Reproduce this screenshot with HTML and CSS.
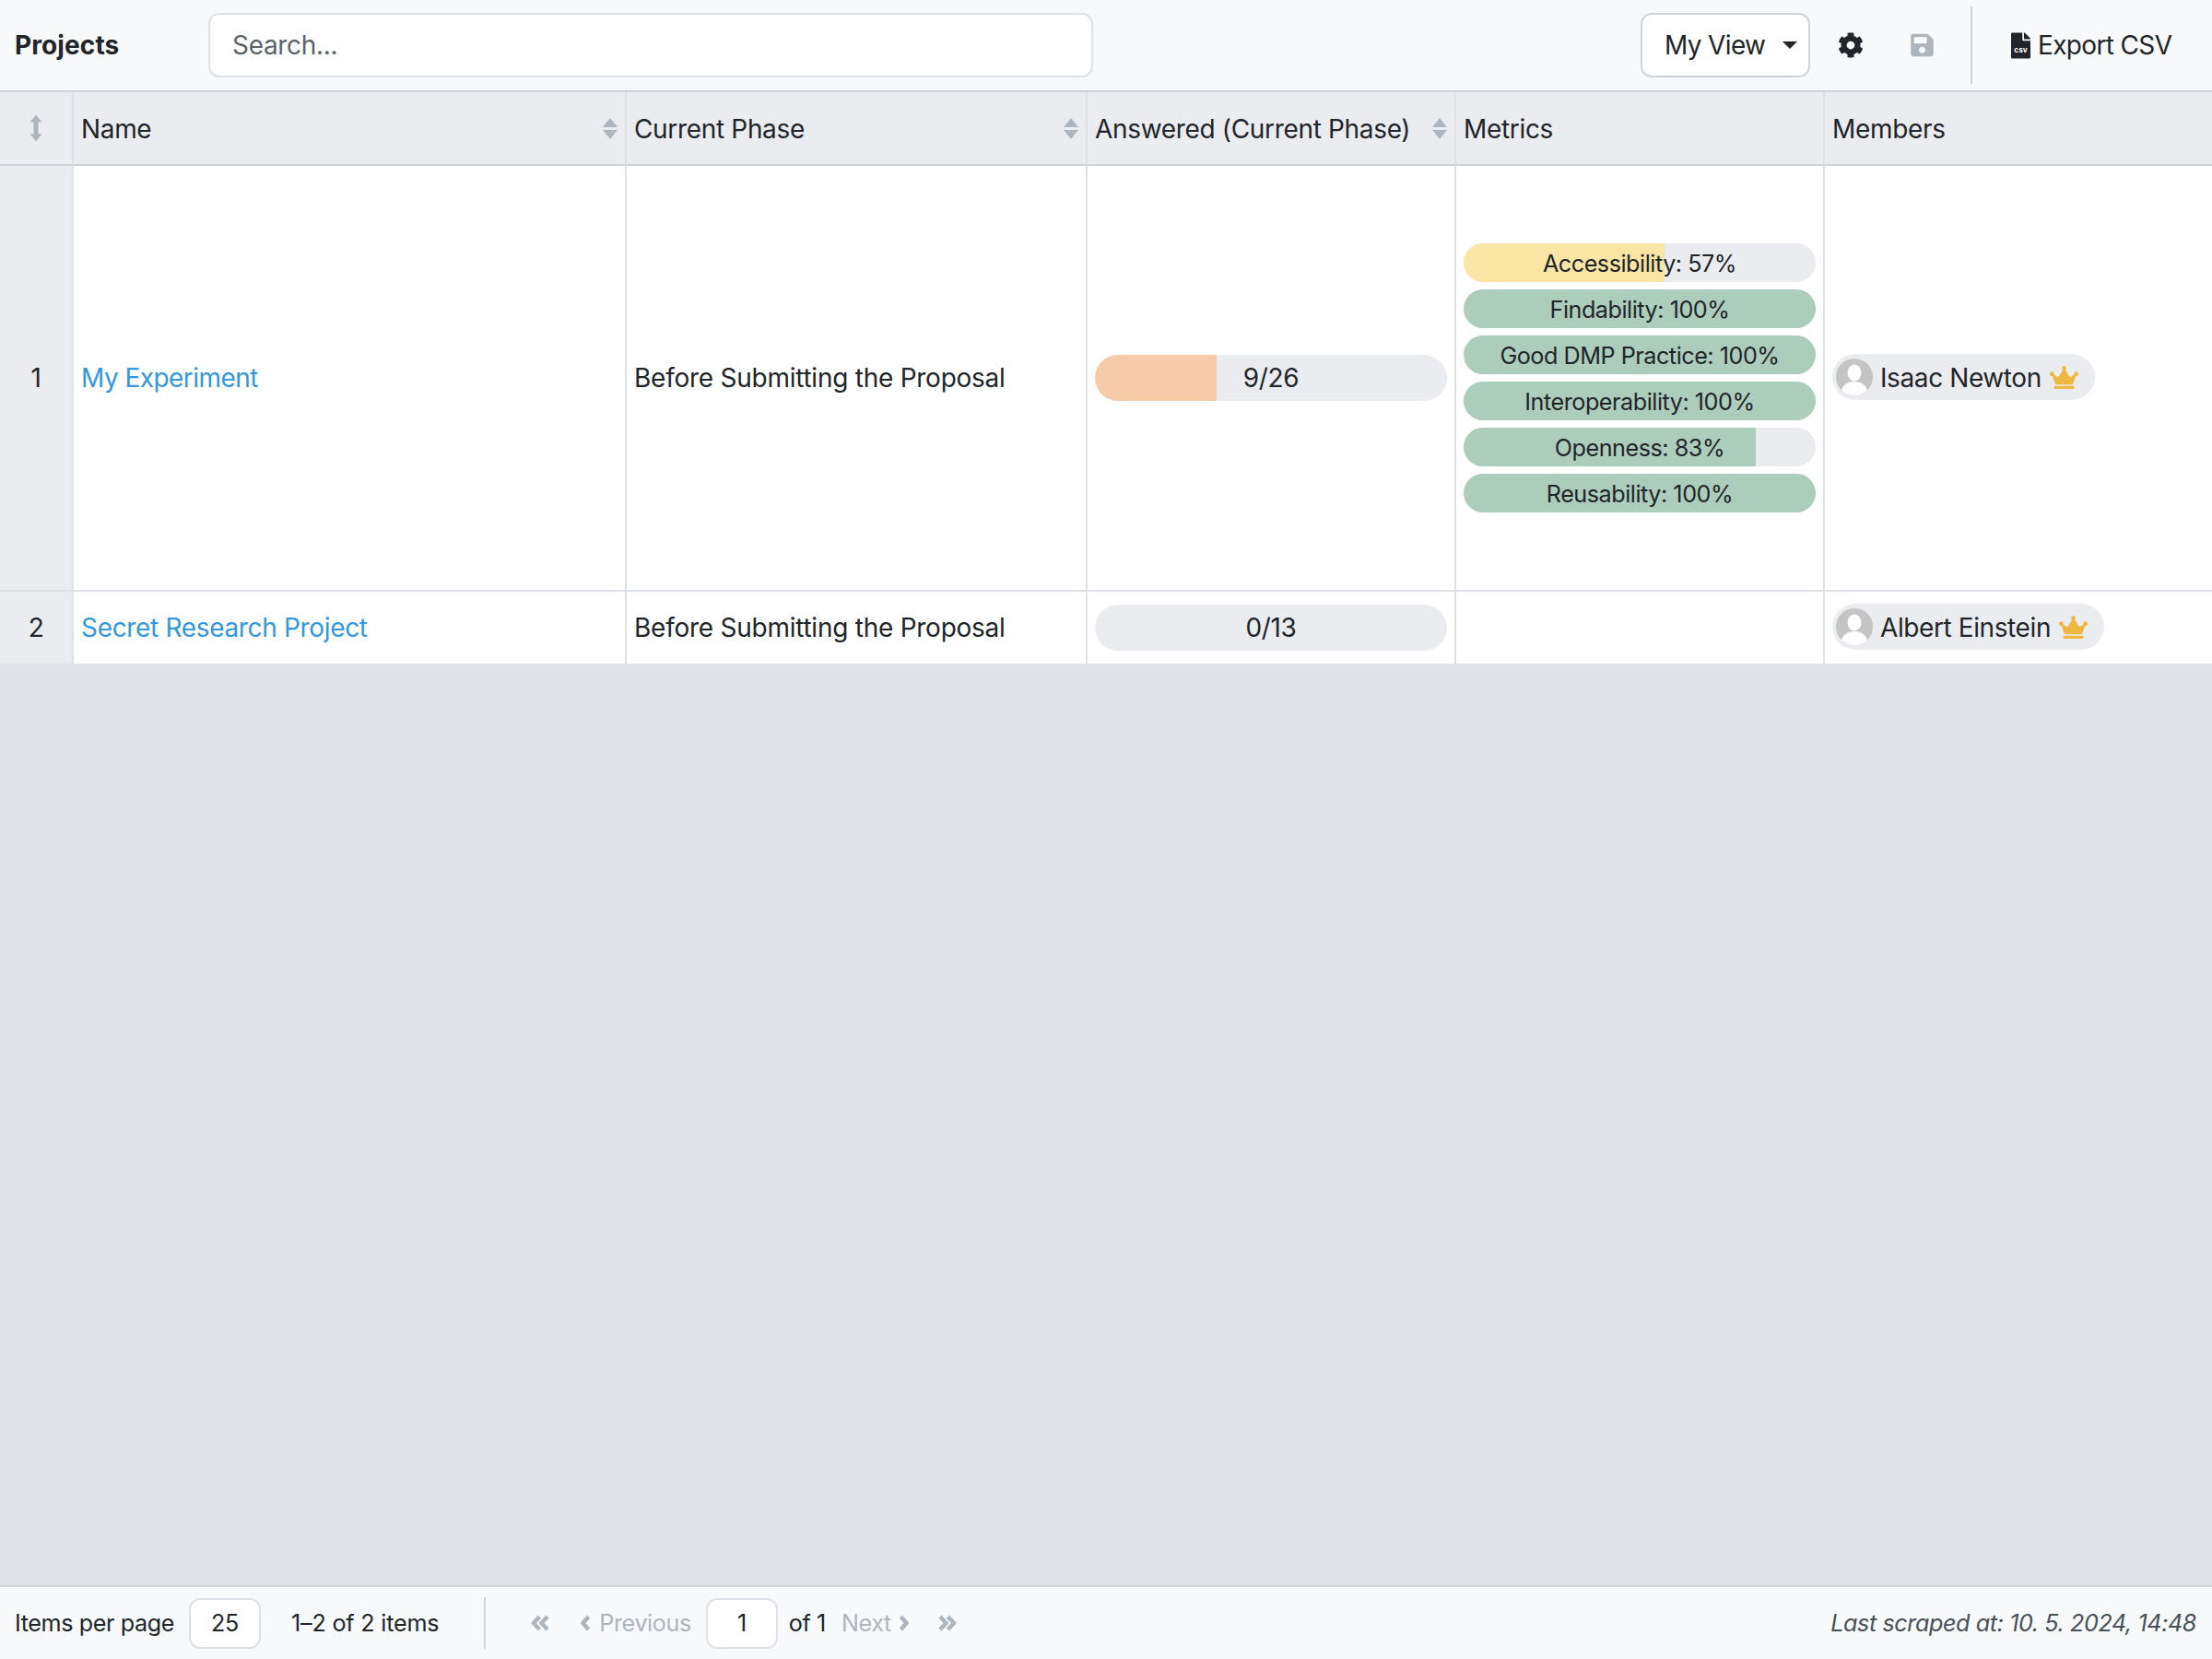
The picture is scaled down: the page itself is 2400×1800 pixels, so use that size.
FILE: index.html
```html
<!DOCTYPE html>
<html lang="en">
<head>
    <meta charset="UTF-8">
    <title>Projects</title>
    <link rel="stylesheet" href="styles.css">
</head>
<body>
    <div class="toolbar">
        <div class="title">Projects</div>
        <input class="search" type="text" placeholder="Search...">
        <div class="toolbar-right">
            <button class="view-select">My View<span class="caret"></span></button>
            <svg class="icon-gear" viewBox="0 0 512 512"><path d="M487.4 315.7l-42.6-24.6c4.3-23.2 4.3-47 0-70.2l42.6-24.6c4.9-2.8 7.1-8.6 5.5-14-11.1-35.6-30-67.8-54.7-94.6-3.8-4.1-10-5.1-14.8-2.3L380.8 110c-17.9-15.4-38.5-27.3-60.8-35.1V25.8c0-5.6-3.9-10.5-9.4-11.7-36.7-8.2-74.3-7.8-109.2 0-5.5 1.2-9.4 6.1-9.4 11.7V75c-22.2 7.9-42.8 19.8-60.8 35.1L88.7 85.5c-4.9-2.8-11-1.9-14.8 2.3-24.7 26.7-43.6 58.9-54.7 94.6-1.7 5.4.6 11.2 5.5 14L67.3 221c-4.3 23.2-4.3 47 0 70.2l-42.6 24.6c-4.9 2.8-7.1 8.6-5.5 14 11.1 35.6 30 67.8 54.7 94.6 3.8 4.1 10 5.1 14.8 2.3l42.6-24.6c17.9 15.4 38.5 27.3 60.8 35.1v49.2c0 5.6 3.9 10.5 9.4 11.7 36.7 8.2 74.3 7.8 109.2 0 5.5-1.2 9.4-6.1 9.4-11.7v-49.2c22.2-7.9 42.8-19.8 60.8-35.1l42.6 24.6c4.9 2.8 11 1.9 14.8-2.3 24.7-26.7 43.6-58.9 54.7-94.6 1.5-5.5-.7-11.3-5.6-14.1zM256 336c-44.1 0-80-35.9-80-80s35.9-80 80-80 80 35.9 80 80-35.9 80-80 80z"/></svg>
            <svg class="icon-save" viewBox="0 0 448 512"><path d="M433.941 129.941l-83.882-83.882A48 48 0 0 0 316.118 32H48C21.49 32 0 53.49 0 80v352c0 26.51 21.49 48 48 48h352c26.51 0 48-21.49 48-48V163.882a48 48 0 0 0-14.059-33.941zM224 416c-35.346 0-64-28.654-64-64 0-35.346 28.654-64 64-64s64 28.654 64 64c0 35.346-28.654 64-64 64zm96-304.52V212c0 6.627-5.373 12-12 12H76c-6.627 0-12-5.373-12-12V108c0-6.627 5.373-12 12-12h228.52c3.183 0 6.235 1.264 8.485 3.515l3.48 3.48A11.996 11.996 0 0 1 320 111.48z"/></svg>
            <div class="toolbar-divider"></div>
            <button class="export">
                <svg class="icon-csv" viewBox="0 0 384 512"><path d="M224 136V0H24C10.7 0 0 10.7 0 24v464c0 13.3 10.7 24 24 24h336c13.3 0 24-10.7 24-24V160H248c-13.2 0-24-10.8-24-24z"/><path d="M377 105L279.1 7c-4.5-4.5-10.6-7-17-7H256v128h128v-6.1c0-6.3-2.5-12.4-7-16.9z"/><text x="192" y="385" text-anchor="middle" class="csv-label">csv</text></svg>
                Export CSV
            </button>
        </div>
    </div>

    <div class="content">
        <table class="projects">
            <colgroup>
                <col class="col-num"><col class="col-name"><col class="col-phase"><col class="col-answered"><col class="col-metrics"><col class="col-members">
            </colgroup>
            <thead>
                <tr>
                    <th class="num-cell">
                        <svg class="icon-reorder" viewBox="0 0 14 30"><path d="M7 0.500L13.500 8.500H0.500ZM7 29.500L0.500 21.500H13.500Z"/><rect x="4.500" y="7" width="5" height="16"/></svg>
                    </th>
                    <th><div class="th-inner">Name<span class="sort"><i class="up"></i><i class="down"></i></span></div></th>
                    <th><div class="th-inner">Current Phase<span class="sort"><i class="up"></i><i class="down"></i></span></div></th>
                    <th><div class="th-inner">Answered (Current Phase)<span class="sort"><i class="up"></i><i class="down"></i></span></div></th>
                    <th><div class="th-inner">Metrics</div></th>
                    <th><div class="th-inner">Members</div></th>
                </tr>
            </thead>
            <tbody>
                <tr class="row-tall">
                    <td class="num-cell">1</td>
                    <td><a class="tight" href="#">My Experiment</a></td>
                    <td class="phase">Before Submitting the Proposal</td>
                    <td>
                        <div class="bar bar-large"><div class="fill fill-orange" style="width: 34.6%"></div><span>9/26</span></div>
                    </td>
                    <td>
                        <div class="metrics">
                            <div class="bar"><div class="fill fill-yellow" style="width: 57%"></div><span>Accessibility: 57%</span></div>
                            <div class="bar"><div class="fill fill-green" style="width: 100%"></div><span>Findability: 100%</span></div>
                            <div class="bar"><div class="fill fill-green" style="width: 100%"></div><span>Good DMP Practice: 100%</span></div>
                            <div class="bar"><div class="fill fill-green" style="width: 100%"></div><span>Interoperability: 100%</span></div>
                            <div class="bar"><div class="fill fill-green" style="width: 83%"></div><span>Openness: 83%</span></div>
                            <div class="bar"><div class="fill fill-green" style="width: 100%"></div><span>Reusability: 100%</span></div>
                        </div>
                    </td>
                    <td>
                        <div class="member">
                            <svg class="avatar" viewBox="0 0 40 40"><defs><clipPath id="av1"><circle cx="20" cy="20" r="20"/></clipPath></defs><circle cx="20" cy="20" r="20" fill="#c4c4c4"/><g clip-path="url(#av1)" fill="#fff"><ellipse cx="20" cy="15.5" rx="7.5" ry="9"/><ellipse cx="20" cy="36" rx="14" ry="11"/></g></svg>
                            <span class="member-name">Isaac Newton</span>
                            <svg class="crown" viewBox="0 0 640 512"><path d="M528 448H112c-8.8 0-16 7.2-16 16v32c0 8.8 7.2 16 16 16h416c8.8 0 16-7.2 16-16v-32c0-8.8-7.2-16-16-16zm64-320c-26.5 0-48 21.5-48 48 0 7.1 1.6 13.7 4.4 19.8L476 239.2c-15.4 9.2-35.3 4-44.2-11.6L350.3 85C361 76.2 368 63 368 48c0-26.5-21.5-48-48-48s-48 21.5-48 48c0 15 7 28.2 17.7 37l-81.5 142.6c-8.9 15.6-28.9 20.8-44.2 11.6l-72.3-43.4c2.7-6 4.4-12.7 4.4-19.8 0-26.5-21.5-48-48-48S0 149.5 0 176s21.5 48 48 48c2.6 0 5.2-.4 7.7-.8L128 416h384l72.3-192.8c2.5.4 5.1.8 7.7.8 26.5 0 48-21.5 48-48s-21.5-48-48-48z"/></svg>
                        </div>
                    </td>
                </tr>
                <tr class="row-short">
                    <td class="num-cell">2</td>
                    <td><a href="#">Secret Research Project</a></td>
                    <td class="phase">Before Submitting the Proposal</td>
                    <td>
                        <div class="bar bar-large"><span>0/13</span></div>
                    </td>
                    <td></td>
                    <td>
                        <div class="member">
                            <svg class="avatar" viewBox="0 0 40 40"><defs><clipPath id="av2"><circle cx="20" cy="20" r="20"/></clipPath></defs><circle cx="20" cy="20" r="20" fill="#c4c4c4"/><g clip-path="url(#av2)" fill="#fff"><ellipse cx="20" cy="15.5" rx="7.5" ry="9"/><ellipse cx="20" cy="36" rx="14" ry="11"/></g></svg>
                            <span class="member-name">Albert Einstein</span>
                            <svg class="crown" viewBox="0 0 640 512"><path d="M528 448H112c-8.8 0-16 7.2-16 16v32c0 8.8 7.2 16 16 16h416c8.8 0 16-7.2 16-16v-32c0-8.8-7.2-16-16-16zm64-320c-26.5 0-48 21.5-48 48 0 7.1 1.6 13.7 4.4 19.8L476 239.2c-15.4 9.2-35.3 4-44.2-11.6L350.3 85C361 76.2 368 63 368 48c0-26.5-21.5-48-48-48s-48 21.5-48 48c0 15 7 28.2 17.7 37l-81.5 142.6c-8.9 15.6-28.9 20.8-44.2 11.6l-72.3-43.4c2.7-6 4.4-12.7 4.4-19.8 0-26.5-21.5-48-48-48S0 149.5 0 176s21.5 48 48 48c2.6 0 5.2-.4 7.7-.8L128 416h384l72.3-192.8c2.5.4 5.1.8 7.7.8 26.5 0 48-21.5 48-48s-21.5-48-48-48z"/></svg>
                        </div>
                    </td>
                </tr>
            </tbody>
        </table>
    </div>

    <div class="footer">
        <span class="per-page">Items per page</span>
        <div class="page-box page-box-size">25</div>
        <span class="item-count">1–2 of 2 items</span>
        <div class="footer-divider"></div>
        <svg class="chev chev-first" viewBox="0 0 21 18"><path d="M9.500 2L3 9l6.500 7M18 2l-6.500 7 6.500 7"/></svg>
        <svg class="chev chev-prev" viewBox="0 0 11 18"><path d="M8.500 2L2.500 9l6 7"/></svg>
        <span class="pager-off">Previous</span>
        <div class="page-box page-box-current">1</div>
        <span class="of-pages">of 1</span>
        <span class="pager-off pager-next">Next</span>
        <svg class="chev chev-next" viewBox="0 0 11 18"><path d="M2.500 2l6 7-6 7"/></svg>
        <svg class="chev chev-last" viewBox="0 0 21 18"><path d="M3 2l6.500 7L3 16M11.500 2L18 9l-6.500 7"/></svg>
        <span class="scraped">Last scraped at: 10. 5. 2024, 14:48</span>
    </div>
</body>
</html>
```

FILE: styles.css
```css
* {
    box-sizing: border-box;
}
body {
    margin: 0;
    height: 100vh;
    display: flex;
    flex-direction: column;
    font-family: Inter, "Liberation Sans", sans-serif;
    font-size: 28px;
    letter-spacing: -0.33px;
    color: #212529;
    background-color: #dfe2e7;
}

/* top toolbar */
.toolbar {
    height: 100px;
    flex: none;
    display: flex;
    align-items: center;
    padding: 0 0 0 16px;
    background-color: #f8f9fb;
    border-bottom: 2px solid #ced4da;
}
.title {
    width: 210px;
    font-weight: 700;
    letter-spacing: 0.1px;
}
.search {
    width: 960px;
    height: 70px;
    padding: 0 24px;
    font: inherit;
    letter-spacing: inherit;
    color: #212529;
    background-color: #fff;
    border: 2px solid #dee2e6;
    border-radius: 12px;
    outline: none;
}
.search::placeholder {
    color: #5c636a;
    opacity: 1;
}
.toolbar-right {
    flex: 1;
    display: flex;
    align-items: center;
    justify-content: flex-end;
}
.view-select {
    width: 184px;
    height: 70px;
    display: flex;
    align-items: center;
    padding: 0 0 0 24px;
    font: inherit;
    letter-spacing: -0.65px;
    color: inherit;
    background-color: #fff;
    border: 2px solid #ced4da;
    border-radius: 12px;
}
.caret {
    margin-left: 19px;
    border-top: 8px solid #212529;
    border-left: 8px solid transparent;
    border-right: 8px solid transparent;
}
.icon-gear {
    width: 28px;
    height: 28px;
    margin-left: 30px;
    fill: #212529;
}
.icon-save {
    width: 25px;
    height: 28px;
    margin-left: 51px;
    fill: #adb5bd;
}
.toolbar-divider {
    width: 2px;
    height: 84px;
    margin-left: 40px;
    background-color: #ced4da;
}
.export {
    display: flex;
    align-items: center;
    width: 260px;
    padding: 0 0 0 42px;
    font: inherit;
    letter-spacing: -0.65px;
    color: inherit;
    background: none;
    border: none;
}
.icon-csv {
    width: 21px;
    height: 29px;
    margin-right: 8px;
    fill: #212529;
}
.csv-label {
    font-family: Inter, sans-serif;
    font-size: 150px;
    font-weight: 700;
    letter-spacing: 0;
    fill: #fff;
}

/* table */
.content {
    flex: 1;
}
.projects {
    width: 100%;
    table-layout: fixed;
    border-collapse: separate;
    border-spacing: 0;
    background-color: #fff;
}
.col-num { width: 80px; }
.col-name { width: 600px; }
.col-phase { width: 500px; }
.col-answered { width: 400px; }
.col-metrics { width: 400px; }
.col-members { width: 420px; }

.projects th {
    height: 80px;
    padding: 0 8px;
    font-weight: 400;
    text-align: left;
    background-color: #ebecf0;
    border-right: 2px solid #dee2e6;
    border-bottom: 2px solid #ced4da;
}
.projects td {
    padding: 0 8px;
    border-right: 2px solid #dee2e6;
    border-bottom: 2px solid #dee2e6;
}
.projects th:last-child, .projects td:last-child {
    border-right: none;
}
.projects .num-cell {
    padding: 0;
    text-align: center;
    background-color: #ebecf0;
}
.projects .phase {
    letter-spacing: -0.25px;
}
.row-tall { height: 462px; }
.row-short { height: 80px; }
.projects a {
    color: #3498db;
    text-decoration: none;
}
.projects a.tight {
    letter-spacing: -0.55px;
}
.th-inner {
    display: flex;
    align-items: center;
    justify-content: space-between;
    padding-top: 1px;
}
.sort {
    display: flex;
    flex-direction: column;
    gap: 3px;
}
.sort i {
    display: block;
    border-left: 8px solid transparent;
    border-right: 8px solid transparent;
}
.sort .up { border-bottom: 10px solid #adb5bd; }
.sort .down { border-top: 10px solid #adb5bd; }
.icon-reorder {
    display: block;
    width: 14px;
    height: 30px;
    margin: 0 auto;
    fill: #adb5bd;
}

/* progress bars */
.bar {
    position: relative;
    height: 42px;
    overflow: hidden;
    font-size: 25.2px;
    line-height: 44px;
    letter-spacing: -0.48px;
    text-align: center;
    background-color: #ebecf0;
    border-radius: 21px;
}
.bar span {
    position: relative;
}
.bar-large {
    height: 50px;
    font-size: 28px;
    line-height: 50px;
    letter-spacing: -0.33px;
    border-radius: 25px;
}
.fill {
    position: absolute;
    top: 0;
    bottom: 0;
    left: 0;
}
.fill-orange { background-color: #f6cca8; }
.fill-yellow { background-color: #fae5a5; }
.fill-green { background-color: #accdbc; }
.metrics {
    display: flex;
    flex-direction: column;
    gap: 8px;
}

/* member chips */
.member {
    display: inline-flex;
    align-items: center;
    height: 50px;
    padding: 0 18px 0 4px;
    background-color: #ebecf0;
    border-radius: 25px;
    white-space: nowrap;
    letter-spacing: -0.4px;
}
.member-name {
    padding-top: 1px;
}
.avatar {
    width: 40px;
    height: 40px;
    margin-right: 8px;
}
.crown {
    width: 31px;
    height: 25px;
    margin-left: 9px;
    fill: #eeb73f;
}

/* bottom bar */
.footer {
    height: 80px;
    flex: none;
    display: flex;
    align-items: center;
    padding: 0 17px 0 16px;
    font-size: 25.2px;
    letter-spacing: -0.42px;
    background-color: #f8f9fb;
    border-top: 2px solid #ced4da;
}
.page-box {
    height: 55px;
    display: flex;
    align-items: center;
    justify-content: center;
    background-color: #fff;
    border: 2px solid #dee2e6;
    border-radius: 12px;
}
.page-box-size {
    width: 78px;
    margin-left: 16px;
}
.page-box-current {
    width: 78px;
    margin-left: 16px;
}
.item-count {
    margin-left: 33px;
    letter-spacing: -0.22px;
}
.footer-divider {
    width: 2px;
    height: 56px;
    margin-left: 49px;
    background-color: #ced4da;
}
.chev {
    height: 18px;
    fill: none;
    stroke: #adb5bd;
    stroke-width: 4.5;
}
.chev-first { width: 21px; margin-left: 49px; }
.chev-prev { width: 11px; margin-left: 33px; }
.chev-next { width: 11px; margin-left: 8px; }
.chev-last { width: 21px; margin-left: 31px; }
.pager-off {
    margin-left: 9px;
    color: #adb5bd;
}
.of-pages {
    margin-left: 12px;
}
.pager-next {
    margin-left: 17px;
}
.scraped {
    margin-left: auto;
    font-style: italic;
    color: #495057;
}
```
